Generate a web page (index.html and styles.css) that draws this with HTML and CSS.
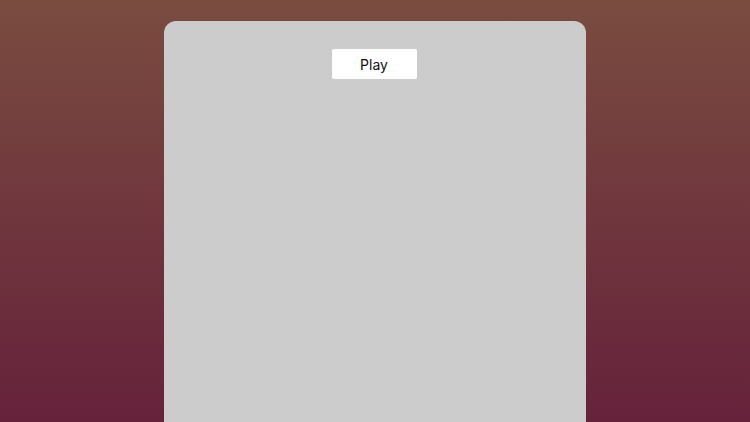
FILE: index.html
```html
<!DOCTYPE html>
<html>
<head>
<meta charset="utf-8">
<link rel="stylesheet" href="styles.css">
</head>
<body>
<main class="stage">
  <section class="card">
    <button class="play">Play</button>
  </section>
</main>
</body>
</html>
```
FILE: styles.css
```css
html, body {
  margin: 0;
  padding: 0;
  height: 100%;
  overflow: hidden;
}
body {
  background: linear-gradient(to bottom, #7a4c40 0%, #66223b 100%);
  font-family: Inter, "Noto Sans", sans-serif;
}
.stage {
  display: flex;
  justify-content: center;
  padding-top: 21px;
}
.card {
  width: 422px;
  height: 401px;
  background: #cccccc;
  border-radius: 12px 12px 0 0;
  display: flex;
  flex-direction: column;
  align-items: center;
  padding-top: 28px;
  box-sizing: border-box;
}
.play {
  width: 85px;
  height: 30px;
  margin-right: 2px;
  background: #ffffff;
  border: none;
  border-radius: 2px;
  font-family: Inter, "Noto Sans", sans-serif;
  font-size: 14px;
  color: #111;
  padding: 0;
  cursor: pointer;
}
```
